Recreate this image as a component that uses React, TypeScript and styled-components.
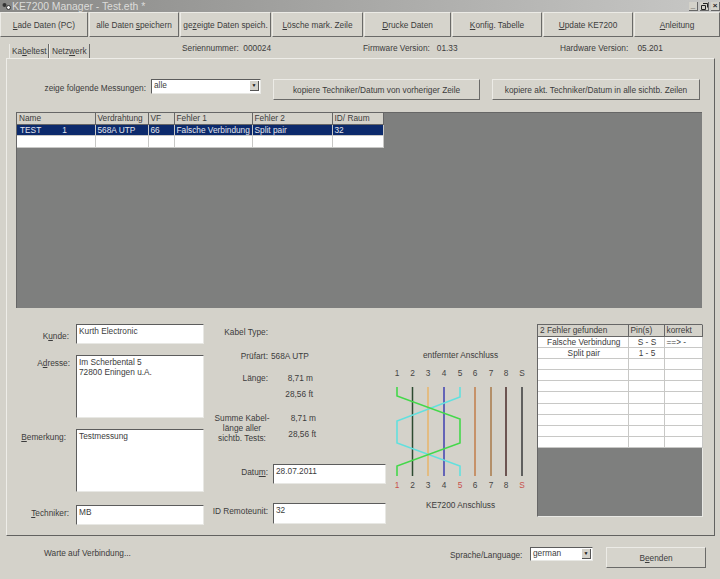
import React from 'react';
import styled, { createGlobalStyle } from 'styled-components';

const GlobalStyle = createGlobalStyle`
  html, body {
    margin: 0;
    padding: 0;
    background: #d4d2ca;
  }
  * {
    box-sizing: border-box;
  }
  u {
    text-underline-offset: 1px;
  }
`;

const Window = styled.div`
  width: 720px;
  height: 579px;
  overflow: hidden;
  display: flex;
  flex-direction: column;
  background: #d4d2ca;
  color: #3c3c3c;
  font-family: 'Liberation Sans', Arial, sans-serif;
  font-size: 8.3px;
`;

const TitleBar = styled.div`
  height: 12px;
  flex: none;
  display: flex;
  align-items: center;
  padding-left: 2px;
  background: linear-gradient(90deg, #888886 0%, #a8a8a6 50%, #c8c8c6 100%);
  color: #dcdcda;
  font-size: 10.4px;
`;

const TitleText = styled.span`
  margin-left: 1px;
  flex: 1;
`;

const WinButtons = styled.div`
  display: flex;
  gap: 2px;
  margin-top: 1px;
`;

const WinButton = styled.div`
  width: 9px;
  height: 9px;
  display: flex;
  align-items: center;
  justify-content: center;
  background: #d4d2ca;
  border-right: 1px solid #666;
  border-bottom: 1px solid #666;
  color: #222;
  font-size: 8px;
  font-weight: bold;
  line-height: 1;
`;

const Toolbar = styled.div`
  height: 25px;
  flex: none;
  display: flex;
  gap: 1px;
`;

const RaisedButton = styled.button<{ $w: number; $h?: number }>`
  width: ${p => p.$w}px;
  height: ${p => p.$h ?? 25}px;
  flex: none;
  padding: 0;
  background: #d6d4cc;
  border: none;
  border-top: 1px solid #ecebe6;
  border-left: 1px solid #ecebe6;
  border-right: 1px solid #6a6a68;
  border-bottom: 1px solid #6a6a68;
  color: #3c3c3c;
  font-family: inherit;
  font-size: 8.3px;
  white-space: nowrap;
`;

const InfoRow = styled.div`
  height: 21px;
  flex: none;
  display: grid;
  grid-template-columns: 182px 181px 197px 1fr;
  align-items: end;
`;

const Tabs = styled.div`
  display: flex;
  padding-left: 9px;
  height: 14px;
`;

const Tab = styled.div<{ $w: number }>`
  width: ${p => p.$w}px;
  height: 14px;
  padding-left: 2px;
  border-right: 1px solid #6a6a68;
  border-left: 1px solid #ecebe6;
  line-height: 15px;
  white-space: nowrap;
`;

const InfoText = styled.div`
  align-self: start;
  padding-top: 6px;
  white-space: pre;
`;

const Panel = styled.div`
  width: 709px;
  height: 478px;
  flex: none;
  margin-left: 6px;
  padding: 20px 0 0 9px;
  border-top: 1px solid #eeede8;
  border-left: 1px solid #eeede8;
  border-right: 1px solid #626260;
  border-bottom: 1px solid #626260;
`;

const FilterRow = styled.div`
  height: 22px;
  display: flex;
  align-items: flex-start;
  margin-bottom: 11px;
`;

const FilterLabel = styled.div`
  width: 130px;
  padding-top: 4px;
  text-align: right;
  white-space: nowrap;
`;

const SelectBox = styled.div<{ $w: number; $h: number }>`
  width: ${p => p.$w}px;
  height: ${p => p.$h}px;
  flex: none;
  display: flex;
  align-items: flex-start;
  justify-content: space-between;
  padding: 0 1px 0 2px;
  background: #fff;
  border-top: 1px solid #5c5c5c;
  border-left: 1px solid #5c5c5c;
  border-right: 1px solid #e8e8e4;
  border-bottom: 1px solid #e8e8e4;
`;

const SelectArrow = styled.div`
  width: 9px;
  height: 10px;
  margin-top: 1px;
  display: flex;
  align-items: center;
  justify-content: center;
  background: #d4d2ca;
  border-right: 1px solid #555;
  border-bottom: 1px solid #555;
  color: #111;
  font-size: 5px;
  line-height: 1;
`;

const FilterSelect = styled.div`
  margin-left: 5px;
  margin-right: 12px;
`;

const CopyButton = styled(RaisedButton)`
  margin-right: 12px;
`;

const GridArea = styled.div`
  width: 686px;
  height: 196px;
  background: #7e7f7e;
  border-top: 1px solid #666;
  border-left: 1px solid #666;
`;

const DataTable = styled.table<{ $w: number }>`
  width: ${p => p.$w}px;
  table-layout: fixed;
  border-collapse: collapse;
  background: #fff;
  font-size: 8.3px;
`;

const HeadCell = styled.th<{ $w?: number }>`
  width: ${p => (p.$w ? `${p.$w}px` : 'auto')};
  height: 11px;
  padding: 0 0 0 2px;
  background: #d4d2ca;
  border-right: 1px solid #666;
  border-bottom: 1px solid #666;
  font-weight: normal;
  line-height: 10px;
  text-align: left;
  white-space: nowrap;
  overflow: hidden;
`;

const Row = styled.tr<{ $selected?: boolean }>`
  background: ${p => (p.$selected ? '#0c2a6c' : '#fff')};
  color: ${p => (p.$selected ? '#e4e6ee' : '#3c3c3c')};
`;

const Cell = styled.td<{ $center?: boolean; $h?: number }>`
  height: ${p => p.$h ?? 11.5}px;
  padding: 0 0 0 2px;
  border-right: 1px solid #c8c8c6;
  border-bottom: 1px solid #c8c8c6;
  line-height: 10px;
  text-align: ${p => (p.$center ? 'center' : 'left')};
  white-space: nowrap;
  overflow: hidden;
`;

const NameCell = styled.span`
  display: flex;
  gap: 21px;
  padding-left: 1px;
`;

const FormArea = styled.div`
  display: flex;
  margin-top: 16px;
`;

const LeftColumn = styled.div`
  width: 188px;
  flex: none;
`;

const Field = styled.div<{ $mb?: number }>`
  display: flex;
  margin-bottom: ${p => p.$mb ?? 0}px;
`;

const FieldLabel = styled.div<{ $w: number; $pt: number }>`
  width: ${p => p.$w}px;
  flex: none;
  padding-top: ${p => p.$pt}px;
  text-align: right;
  white-space: nowrap;
`;

const TextBox = styled.div<{ $w: number; $h: number; $ml: number }>`
  width: ${p => p.$w}px;
  height: ${p => p.$h}px;
  flex: none;
  margin-left: ${p => p.$ml}px;
  padding: 1px 0 0 2px;
  background: #fff;
  border-top: 1px solid #5c5c5c;
  border-left: 1px solid #5c5c5c;
  border-right: 1px solid #e8e8e4;
  border-bottom: 1px solid #e8e8e4;
  line-height: 10px;
  white-space: pre;
`;

const MiddleColumn = styled.div`
  width: 176px;
  flex: none;
  margin-left: 6px;
  padding-top: 3px;
`;

const MeasureRow = styled.div<{ $h: number }>`
  height: ${p => p.$h}px;
  display: flex;
  align-items: flex-start;
  line-height: 10px;
  white-space: nowrap;
`;

const MeasureLabel = styled.div`
  width: 58px;
  flex: none;
  text-align: right;
`;

const MeasureValue = styled.div`
  margin-left: 3px;
`;

const SumLabel = styled.div`
  width: 64px;
  flex: none;
  text-align: center;
`;

const LengthValues = styled.div<{ $w: number }>`
  width: ${p => p.$w}px;
  flex: none;
  display: flex;
  flex-direction: column;
  align-items: flex-end;
  gap: 6px;
`;

const Diagram = styled.div`
  width: 144px;
  flex: none;
  display: flex;
  flex-direction: column;
  align-items: center;
  padding-top: 26px;
`;

const Caption = styled.div`
  padding-left: 5px;
  text-align: center;
  line-height: 10px;
`;

const Wires = styled.svg`
  display: block;
  margin-top: 6px;
  margin-bottom: 10px;
`;

const ErrorPane = styled.div`
  width: 166px;
  height: 193px;
  flex: none;
  margin-left: 7px;
  background: #7e7f7e;
  border-top: 1px solid #666;
  border-left: 1px solid #666;
  border-right: 1px solid #e8e8e4;
  border-bottom: 1px solid #e8e8e4;
`;

const StatusBar = styled.div`
  flex: 1;
  display: flex;
  align-items: flex-start;
  padding-top: 11px;
`;

const StatusText = styled.div`
  width: 406px;
  margin-left: 44px;
  padding-top: 1px;
`;

const LanguageLabel = styled.div`
  width: 80px;
  padding-top: 3px;
`;

const LanguageSelect = styled.div`
  margin-right: 13px;
`;

const pinX = [397, 412.5, 428, 444, 460, 475, 491, 506, 522];
const pinNames = ['1', '2', '3', '4', '5', '6', '7', '8', 'S'];
const faultyPins = ['1', '5', 'S'];

const straightWires = [
  { x: 412.5, color: '#2d4a30' },
  { x: 428, color: '#e8b468' },
  { x: 444, color: '#3f3fb0' },
  { x: 475, color: '#c27c48' },
  { x: 491, color: '#a87848' },
  { x: 506, color: '#4a2a28' },
  { x: 522, color: '#38383a' },
];

function Wiring() {
  return (
    <Wires width="144" height="124" viewBox="386 366 144 124">
      {pinX.map((x, i) => (
        <text key={i} x={x} y={376} fontSize="8.3" textAnchor="middle" fill="#444">
          {pinNames[i]}
        </text>
      ))}
      {straightWires.map(w => (
        <line key={w.x} x1={w.x} y1={387} x2={w.x} y2={476} stroke={w.color} strokeWidth="1.5" />
      ))}
      <polyline
        points="460,387 460,397 397,421 397,443 460,466 460,476"
        fill="none"
        stroke="#62e0de"
        strokeWidth="1.6"
      />
      <polyline
        points="397,387 397,396 460,419 460,443 397,466 397,476"
        fill="none"
        stroke="#44d84a"
        strokeWidth="1.6"
      />
      {pinX.map((x, i) => (
        <text
          key={i}
          x={x}
          y={488}
          fontSize="8.3"
          textAnchor="middle"
          fill={faultyPins.includes(pinNames[i]) ? '#c8504a' : '#444'}
        >
          {pinNames[i]}
        </text>
      ))}
    </Wires>
  );
}

const toolbar: [string, string, string, number][] = [
  ['', 'L', 'ade Daten (PC)', 88],
  ['alle Daten ', 's', 'peichern', 90],
  ['ge', 'z', 'eigte Daten speich.', 91],
  ['', 'L', 'ösche mark. Zeile', 91],
  ['', 'D', 'rucke Daten', 87],
  ['', 'K', 'onfig. Tabelle', 90],
  ['', 'U', 'pdate KE7200', 90],
  ['', 'A', 'nleitung', 86],
];

const faults = [
  ['Falsche Verbindung', 'S - S', '==> -'],
  ['Split pair', '1 - 5', ''],
  ['', '', ''],
  ['', '', ''],
  ['', '', ''],
  ['', '', ''],
  ['', '', ''],
  ['', '', ''],
  ['', '', ''],
  ['', '', ''],
];

export default function App() {
  return (
    <Window>
      <GlobalStyle />
      <TitleBar>
        <svg width="9" height="9" viewBox="0 0 9 9">
          <circle cx="2.5" cy="3" r="2" fill="#333" />
          <circle cx="6.5" cy="5.5" r="2" fill="#eee" stroke="#333" />
        </svg>
        <TitleText>KE7200 Manager - Test.eth *</TitleText>
        <WinButtons>
          <WinButton>_</WinButton>
          <WinButton>
            <svg width="7" height="7" viewBox="0 0 7 7">
              <path d="M2 0.5h4.5v4M0.5 2.5h4v4h-4z" fill="none" stroke="#222" />
            </svg>
          </WinButton>
          <WinButton>×</WinButton>
        </WinButtons>
      </TitleBar>

      <Toolbar>
        {toolbar.map(([before, key, after, w]) => (
          <RaisedButton key={key + after} $w={w}>
            {before}
            <u>{key}</u>
            {after}
          </RaisedButton>
        ))}
      </Toolbar>

      <InfoRow>
        <Tabs>
          <Tab $w={40}>
            Ka<u>b</u>eltest
          </Tab>
          <Tab $w={41}>
            Netz<u>w</u>erk
          </Tab>
        </Tabs>
        <InfoText>Seriennummer:  000024</InfoText>
        <InfoText>Firmware Version:   01.33</InfoText>
        <InfoText>Hardware Version:    05.201</InfoText>
      </InfoRow>

      <Panel>
        <FilterRow>
          <FilterLabel>zeige folgende Messungen:</FilterLabel>
          <FilterSelect>
            <SelectBox $w={110} $h={15}>
              alle
              <SelectArrow>▼</SelectArrow>
            </SelectBox>
          </FilterSelect>
          <CopyButton $w={207} $h={21}>
            kopiere Techniker/Datum von vorheriger Zeile
          </CopyButton>
          <RaisedButton $w={208} $h={21}>
            kopiere akt. Techniker/Datum in alle sichtb. Zeilen
          </RaisedButton>
        </FilterRow>

        <GridArea>
          <DataTable $w={367}>
            <thead>
              <tr>
                <HeadCell $w={78}>Name</HeadCell>
                <HeadCell $w={53}>Verdrahtung</HeadCell>
                <HeadCell $w={26}>VF</HeadCell>
                <HeadCell $w={78}>Fehler 1</HeadCell>
                <HeadCell $w={80}>Fehler 2</HeadCell>
                <HeadCell>ID/ Raum</HeadCell>
              </tr>
            </thead>
            <tbody>
              <Row $selected>
                <Cell>
                  <NameCell>
                    <span>TEST</span>
                    <span>1</span>
                  </NameCell>
                </Cell>
                <Cell>568A UTP</Cell>
                <Cell>66</Cell>
                <Cell>Falsche Verbindung</Cell>
                <Cell>Split pair</Cell>
                <Cell>32</Cell>
              </Row>
              <Row>
                <Cell />
                <Cell />
                <Cell />
                <Cell />
                <Cell />
                <Cell />
              </Row>
            </tbody>
          </DataTable>
        </GridArea>

        <FormArea>
          <LeftColumn>
            <Field $mb={11}>
              <FieldLabel $w={53} $pt={7}>
                K<u>u</u>nde:
              </FieldLabel>
              <TextBox $w={128} $h={20} $ml={7}>
                Kurth Electronic
              </TextBox>
            </Field>
            <Field $mb={11}>
              <FieldLabel $w={54} $pt={3}>
                A<u>d</u>resse:
              </FieldLabel>
              <TextBox $w={128} $h={63} $ml={6}>
                {'Im Scherbental 5\n72800 Eningen u.A.'}
              </TextBox>
            </Field>
            <Field $mb={13}>
              <FieldLabel $w={50} $pt={3}>
                <u>B</u>emerkung:
              </FieldLabel>
              <TextBox $w={128} $h={63} $ml={10}>
                Testmessung
              </TextBox>
            </Field>
            <Field>
              <FieldLabel $w={53} $pt={3}>
                <u>T</u>echniker:
              </FieldLabel>
              <TextBox $w={128} $h={20} $ml={7}>
                MB
              </TextBox>
            </Field>
          </LeftColumn>

          <MiddleColumn>
            <MeasureRow $h={24}>
              <MeasureLabel>Kabel Type:</MeasureLabel>
            </MeasureRow>
            <MeasureRow $h={22}>
              <MeasureLabel>Prüfart:</MeasureLabel>
              <MeasureValue>568A UTP</MeasureValue>
            </MeasureRow>
            <MeasureRow $h={40}>
              <MeasureLabel>Länge:</MeasureLabel>
              <LengthValues $w={45}>
                <span>8,71 m</span>
                <span>28,56 ft</span>
              </LengthValues>
            </MeasureRow>
            <MeasureRow $h={51}>
              <SumLabel>
                Summe Kabel-
                <br />
                länge aller
                <br />
                sichtb. Tests:
              </SumLabel>
              <LengthValues $w={42}>
                <span>8,71 m</span>
                <span>28,56 ft</span>
              </LengthValues>
            </MeasureRow>
            <Field $mb={19}>
              <FieldLabel $w={58} $pt={3}>
                Datu<u>m</u>:
              </FieldLabel>
              <TextBox $w={113} $h={20} $ml={5}>
                28.07.2011
              </TextBox>
            </Field>
            <Field>
              <FieldLabel $w={58} $pt={3}>
                ID Remoteunit:
              </FieldLabel>
              <TextBox $w={113} $h={21} $ml={5}>
                32
              </TextBox>
            </Field>
          </MiddleColumn>

          <Diagram>
            <Caption>entfernter Anschluss</Caption>
            <Wiring />
            <Caption>KE7200 Anschluss</Caption>
          </Diagram>

          <ErrorPane>
            <DataTable $w={165}>
              <thead>
                <tr>
                  <HeadCell $w={90}>2 Fehler gefunden</HeadCell>
                  <HeadCell $w={36}>Pin(s)</HeadCell>
                  <HeadCell>korrekt</HeadCell>
                </tr>
              </thead>
              <tbody>
                {faults.map((f, i) => (
                  <Row key={i}>
                    <Cell $center $h={11.2}>
                      {f[0]}
                    </Cell>
                    <Cell $center $h={11.2}>
                      {f[1]}
                    </Cell>
                    <Cell $h={11.2}>{f[2]}</Cell>
                  </Row>
                ))}
              </tbody>
            </DataTable>
          </ErrorPane>
        </FormArea>
      </Panel>

      <StatusBar>
        <StatusText>Warte auf Verbindung...</StatusText>
        <LanguageLabel>Sprache/Language:</LanguageLabel>
        <LanguageSelect>
          <SelectBox $w={63} $h={14}>
            german
            <SelectArrow>▼</SelectArrow>
          </SelectBox>
        </LanguageSelect>
        <RaisedButton $w={100} $h={21}>
          B<u>e</u>enden
        </RaisedButton>
      </StatusBar>
    </Window>
  );
}
